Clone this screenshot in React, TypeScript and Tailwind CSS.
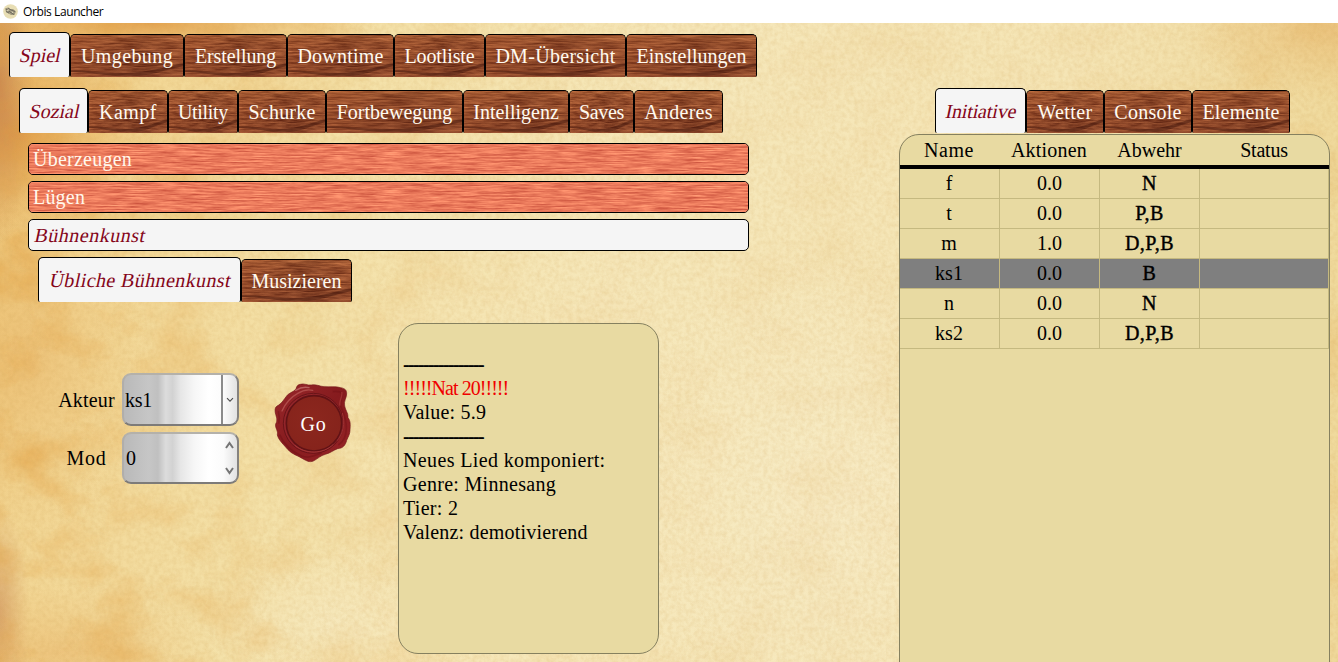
import React from "react";

type Label = { text: string; box: string; tracking?: string };

function Parchment() {
  return (
    <svg className="absolute inset-0 h-full w-full" preserveAspectRatio="none" viewBox="0 0 1338 639" aria-hidden="true">
      <defs>
        <linearGradient id="pBase" x1="0" x2="1" y1="0" y2="0.12">
          <stop offset="0" stopColor="#ecc274" />
          <stop offset="0.1" stopColor="#f2d592" />
          <stop offset="0.28" stopColor="#f4e1a8" />
          <stop offset="0.5" stopColor="#f6e8bb" />
          <stop offset="0.8" stopColor="#f5e5b5" />
          <stop offset="1" stopColor="#f0da9d" />
        </linearGradient>
        <radialGradient id="pOrange">
          <stop offset="0" stopColor="#de8f35" stopOpacity="0.7" />
          <stop offset="1" stopColor="#e6a548" stopOpacity="0" />
        </radialGradient>
        <radialGradient id="pBrown">
          <stop offset="0" stopColor="#c0784a" stopOpacity="0.7" />
          <stop offset="1" stopColor="#c98a52" stopOpacity="0" />
        </radialGradient>
        <radialGradient id="pLight">
          <stop offset="0" stopColor="#f8edc9" stopOpacity="0.8" />
          <stop offset="1" stopColor="#f8edc9" stopOpacity="0" />
        </radialGradient>
        <filter id="pBlotch" x="0" y="0" width="100%" height="100%" colorInterpolationFilters="sRGB">
          <feTurbulence type="fractalNoise" baseFrequency="0.014 0.018" numOctaves="6" seed="21" />
          <feColorMatrix values="0 0 0 0 0.89  0 0 0 0 0.63  0 0 0 0 0.26  1.5 0 0 0 -0.66" />
        </filter>
        <filter id="pGrain" x="0" y="0" width="100%" height="100%" colorInterpolationFilters="sRGB">
          <feTurbulence type="fractalNoise" baseFrequency="0.22" numOctaves="4" seed="3" />
          <feColorMatrix values="0 0 0 0 0.8  0 0 0 0 0.62  0 0 0 0 0.32  0.32 0 0 0 -0.1" />
        </filter>
        <linearGradient id="pFade" x1="0" x2="1">
          <stop offset="0" stopColor="#fff" />
          <stop offset="0.12" stopColor="#999" />
          <stop offset="0.25" stopColor="#555" />
          <stop offset="0.45" stopColor="#222" />
          <stop offset="0.8" stopColor="#222" />
          <stop offset="1" stopColor="#555" />
        </linearGradient>
        <mask id="pMask">
          <rect width="1338" height="639" fill="url(#pFade)" />
        </mask>
      </defs>
      <rect width="1338" height="639" fill="url(#pBase)" />
      <ellipse cx="20" cy="110" rx="130" ry="110" fill="url(#pOrange)" />
      <ellipse cx="150" cy="0" rx="230" ry="35" fill="url(#pOrange)" />
      <ellipse cx="0" cy="60" rx="35" ry="160" fill="url(#pBrown)" />
      <ellipse cx="0" cy="590" rx="30" ry="110" fill="url(#pBrown)" opacity="0.7" />
      <ellipse cx="30" cy="340" rx="120" ry="170" fill="url(#pOrange)" opacity="0.35" />
      <ellipse cx="60" cy="630" rx="160" ry="70" fill="url(#pOrange)" opacity="0.4" />
      <ellipse cx="1330" cy="5" rx="150" ry="75" fill="url(#pOrange)" opacity="0.45" />
      <ellipse cx="830" cy="480" rx="220" ry="260" fill="url(#pLight)" />
      <ellipse cx="330" cy="600" rx="130" ry="80" fill="url(#pLight)" opacity="0.6" />
      <g mask="url(#pMask)">
        <rect width="1338" height="639" filter="url(#pBlotch)" />
      </g>
      <rect width="1338" height="639" filter="url(#pGrain)" />
    </svg>
  );
}

function SharedFilters() {
  return (
    <svg className="absolute h-0 w-0" aria-hidden="true">
      <defs>
        <filter id="woodDark" x="0" y="0" width="100%" height="100%" colorInterpolationFilters="sRGB">
          <feTurbulence type="fractalNoise" baseFrequency="0.05 0.6" numOctaves="4" seed="12" />
          <feColorMatrix values="0.7 0 0 0 0.24  0.56 0 0 0 0.03  0.38 0 0 0 -0.01  0 0 0 0 1" />
        </filter>
        <filter id="woodLight" x="0" y="0" width="100%" height="100%" colorInterpolationFilters="sRGB">
          <feTurbulence type="fractalNoise" baseFrequency="0.04 0.65" numOctaves="4" seed="5" />
          <feColorMatrix values="0.34 0 0 0 0.75  0.42 0 0 0 0.27  0.32 0 0 0 0.2  0 0 0 0 1" />
        </filter>
        <linearGradient id="woodShade" x1="0" x2="0" y1="0" y2="1">
          <stop offset="0" stopColor="#c77a42" stopOpacity="0.35" />
          <stop offset="0.4" stopColor="#8a4020" stopOpacity="0.1" />
          <stop offset="0.75" stopColor="#5a2010" stopOpacity="0.25" />
          <stop offset="1" stopColor="#a55a3a" stopOpacity="0.4" />
        </linearGradient>
        <linearGradient id="woodEdge" x1="0" x2="1" y1="0" y2="0">
          <stop offset="0" stopColor="#c0683a" stopOpacity="0.25" />
          <stop offset="0.6" stopColor="#4a180c" stopOpacity="0.2" />
          <stop offset="1" stopColor="#a85c36" stopOpacity="0.2" />
        </linearGradient>
      </defs>
    </svg>
  );
}

function DarkWood() {
  return (
    <svg className="absolute inset-0 h-full w-full" viewBox="0 0 100 43" preserveAspectRatio="none" aria-hidden="true">
      <rect width="100" height="43" filter="url(#woodDark)" />
      <rect width="100" height="43" fill="url(#woodShade)" />
      <rect width="100" height="43" fill="url(#woodEdge)" />
      <path d="M0 36 C20 36 38 41 60 38 S85 32 100 29 V32 C85 35 76 41 58 42 H40 C25 40 12 38 0 37.5Z" fill="#3d130a" opacity="0.45" />
    </svg>
  );
}

const serif = "font-['Liberation_Serif',serif] text-[20px] leading-[24px]";

function TabBar({ items, className = "" }: { items: Label[]; className?: string }) {
  return (
    <div className={`flex h-[45px] items-end ${className}`}>
      {items.map((t, i) =>
        i === 0 ? (
          <button
            key={t.text}
            className={`flex h-[45px] shrink-0 items-center justify-center rounded-t-[5px] rounded-b-[2px] border border-b-0 border-black bg-[#f5f5f5] pl-[2px] whitespace-nowrap text-[#85061a] ${t.box}`}
          >
            <span className={`inline-block -skew-x-12 ${t.tracking ?? ""}`}>{t.text}</span>
          </button>
        ) : (
          <button
            key={t.text}
            className={`relative flex h-[43px] shrink-0 items-center justify-center overflow-hidden rounded-t-[5px] rounded-b-[2px] border border-b-0 border-black bg-[#8a4526] whitespace-nowrap text-[#fffaf0] ${t.box}`}
          >
            <DarkWood />
            <span className={`relative ${t.tracking ?? ""}`}>{t.text}</span>
          </button>
        ),
      )}
    </div>
  );
}

const mainTabs: Label[] = [
  { text: "Spiel", box: "w-[61px]" },
  { text: "Umgebung", box: "w-[114px]", tracking: "tracking-[0.4px]" },
  { text: "Erstellung", box: "w-[103px]", tracking: "tracking-[-0.1px]" },
  { text: "Downtime", box: "w-[107px]", tracking: "tracking-[0.2px]" },
  { text: "Lootliste", box: "w-[91px]", tracking: "tracking-[-0.1px]" },
  { text: "DM-Übersicht", box: "w-[141px]", tracking: "tracking-[0.3px]" },
  { text: "Einstellungen", box: "w-[131px]" },
];

const skillTabs: Label[] = [
  { text: "Sozial", box: "w-[69px]" },
  { text: "Kampf", box: "w-[80px]", tracking: "tracking-[0.5px]" },
  { text: "Utility", box: "w-[70px]", tracking: "tracking-[-0.3px]" },
  { text: "Schurke", box: "w-[88px]", tracking: "tracking-[0.2px]" },
  { text: "Fortbewegung", box: "w-[137px]" },
  { text: "Intelligenz", box: "w-[106px]" },
  { text: "Saves", box: "w-[65px]", tracking: "tracking-[-0.3px]" },
  { text: "Anderes", box: "w-[89px]", tracking: "tracking-[0.3px]" },
];

const artTabs: Label[] = [
  { text: "Übliche Bühnenkunst", box: "w-[203px]", tracking: "tracking-[0.4px]" },
  { text: "Musizieren", box: "w-[111px]" },
];

const sideTabs: Label[] = [
  { text: "Initiative", box: "w-[91px]", tracking: "tracking-[-0.15px]" },
  { text: "Wetter", box: "w-[78px]", tracking: "tracking-[0.4px]" },
  { text: "Console", box: "w-[88px]", tracking: "tracking-[0.25px]" },
  { text: "Elemente", box: "w-[98px]", tracking: "tracking-[0.2px]" },
];

function WoodBar({ text, tracking }: { text: string; tracking: string }) {
  return (
    <div className="relative flex h-8 items-center overflow-hidden rounded-[5px] border border-black bg-[#e8795a] pl-[4px] text-[#fff8ec]">
      <svg className="absolute inset-0 h-full w-full" aria-hidden="true">
        <rect width="100%" height="100%" filter="url(#woodLight)" />
      </svg>
      <span className={`relative ${tracking}`}>{text}</span>
    </div>
  );
}

const metal =
  "border-t-2 border-r-2 border-b-2 border-l-2 border-t-[#b4b1aa] border-l-[#b0aeab] border-r-[#85827f] border-b-[#7d7b79] bg-[linear-gradient(90deg,#b9b9b9_0%,#c6c6c6_22%,#c0c0c0_30%,#dcdcdc_37%,#d2d2d2_43%,#e6e6e6_50%,#f6f6f6_62%,#ffffff_75%,#fbfbfb_88%,#e2e2e2_100%)]";

function Seal() {
  return (
    <button className="relative mt-[81px] ml-[35px] flex h-[80px] w-[77px] items-center justify-center text-white">
      <svg className="absolute inset-0 h-full w-full" viewBox="702 70 231 240" aria-hidden="true">
        <defs>
          <radialGradient id="sealDisc" cx="0.45" cy="0.45" r="0.6">
            <stop offset="0" stopColor="#8c271e" />
            <stop offset="1" stopColor="#85231b" />
          </radialGradient>
          <linearGradient id="sealRim" x1="0" x2="1" y1="0" y2="1">
            <stop offset="0" stopColor="#98272a" />
            <stop offset="0.5" stopColor="#861b1e" />
            <stop offset="1" stopColor="#982427" />
          </linearGradient>
        </defs>
        <path
          d="M781 74 C792 70 802 78 814 76 C828 73 838 80 852 81 C873 83 885 79 902 84 C917 87 920 92 920 103 C919 116 911 124 914 139 C916 152 925 160 924 174 C932 184 931 196 930 210 C930 224 925 230 920 242 C916 258 908 266 893 267 C881 271 871 280 856 284 C842 287 834 297 820 304 C808 309 799 303 788 297 C775 288 756 284 744 270 C733 257 716 242 712 226 C716 214 704 205 707 193 C714 182 709 172 706 160 C704 147 706 141 715 137 C727 130 732 118 740 109 C747 98 768 96 770 82 C772 77 776 75 781 74Z"
          fill="url(#sealRim)"
          stroke="#74161a"
          strokeWidth="2"
        />
        <path d="M726 154 C736 132 752 113 772 102 C787 92 804 89 818 92" fill="none" stroke="#c2625d" strokeWidth="4" strokeLinecap="round" opacity="0.65" />
        <path d="M767 92 C780 84 794 81 807 84" fill="none" stroke="#dd9a94" strokeWidth="4" strokeLinecap="round" opacity="0.5" />
        <path d="M715 155 C719 170 719 180 716 192 M719 225 C731 253 754 276 785 289 C806 297 824 287 845 280" fill="none" stroke="#6d1014" strokeWidth="5" opacity="0.45" />
        <path d="M878 96 C892 94 903 96 907 104 C904 118 899 126 902 139 C909 157 920 178 919 205 C919 227 911 246 895 256" fill="none" stroke="#6d1014" strokeWidth="5" opacity="0.4" />
        <path d="M905 97 C910 106 896 125 900 138" fill="none" stroke="#b64442" strokeWidth="4" opacity="0.6" />
        <circle cx="820" cy="191" r="90" fill="#92252a" stroke="#6a1418" strokeWidth="3" />
        <circle cx="822" cy="191" r="83" fill="url(#sealDisc)" stroke="#611215" strokeWidth="5" />
        <path d="M765 257 C796 284 849 284 880 254" fill="none" stroke="#ad3f3c" strokeWidth="3" opacity="0.7" />
        <path d="M907 160 C916 192 909 222 892 243" fill="none" stroke="#ad3a3a" strokeWidth="3" opacity="0.7" />
      </svg>
      <span className="relative mt-px ml-[2px] tracking-[0.8px]">Go</span>
    </button>
  );
}

function Controls() {
  return (
    <div className="mt-[71px] flex w-[203px] flex-col gap-[6px]">
      <div className="flex h-[53px] items-center">
        <span className="w-[86px] pl-[15px] text-center tracking-[0.2px]">Akteur</span>
        <div className={`ml-auto flex h-[53px] w-[117px] items-stretch rounded-[9px] ${metal}`}>
          <span className="flex flex-1 items-center pl-[1px] tracking-[-0.3px]">ks1</span>
          <span className="flex w-[16px] items-center justify-center border-l-2 border-[#8b8b8b]">
            <svg width="8" height="6" viewBox="0 0 8 6" fill="none" stroke="#4c4c4c" strokeWidth="1.1">
              <path d="M1 1.2 4 4.2 7 1.2" />
            </svg>
          </span>
        </div>
      </div>
      <div className="flex h-[52px] items-center">
        <span className="w-[86px] pl-[15px] text-center tracking-[0.7px]">Mod</span>
        <div className={`ml-auto flex h-[52px] w-[117px] items-stretch rounded-[9px] ${metal}`}>
          <span className="flex flex-1 items-center pl-[2px]">0</span>
          <span className="flex w-[16px] flex-col items-center justify-between py-[7px] pl-px">
            <svg width="9" height="8" viewBox="0 0 9 8" fill="none" stroke="#747474" strokeWidth="2">
              <path d="M1 7 4.5 2 8 7" />
            </svg>
            <svg width="9" height="8" viewBox="0 0 9 8" fill="none" stroke="#747474" strokeWidth="2">
              <path d="M1 1 4.5 6 8 1" />
            </svg>
          </span>
        </div>
      </div>
    </div>
  );
}

function Output() {
  return (
    <div className="mt-[21px] ml-[47px] h-[331px] w-[261px] rounded-[20px] border border-[#85805f] bg-[#e8daa2] pt-[28px] pl-1 whitespace-nowrap">
      <div className="font-bold tracking-[-1.66px]">----------------</div>
      <div className="tracking-[-0.95px] text-[#f00000]">!!!!!Nat 20!!!!!</div>
      <div className="tracking-[0.2px]">Value: 5.9</div>
      <div className="font-bold tracking-[-1.66px]">----------------</div>
      <div className="tracking-[0.37px]">Neues Lied komponiert:</div>
      <div className="tracking-[0.3px]">Genre: Minnesang</div>
      <div className="tracking-[0.3px]">Tier: 2</div>
      <div className="tracking-[0.2px]">Valenz: demotivierend</div>
    </div>
  );
}

const rows = [
  ["f", "0.0", "N"],
  ["t", "0.0", "P,B"],
  ["m", "1.0", "D,P,B"],
  ["ks1", "0.0", "B"],
  ["n", "0.0", "N"],
  ["ks2", "0.0", "D,P,B"],
];

function InitiativeTable() {
  return (
    <div className="mt-px h-[560px] w-[431px] rounded-[20px] border border-[#85805f] bg-[#e8daa2] text-black">
      <div className="grid h-[34px] grid-cols-[100px_100px_100px_129px] border-b-4 border-black pt-[3px] text-center">
        <span className="pr-[2px] tracking-[0.5px]">Name</span>
        <span className="pr-[2px] tracking-[0.2px]">Aktionen</span>
        <span className="pr-px">Abwehr</span>
        <span className="pr-px tracking-[-0.2px]">Status</span>
      </div>
      {rows.map((r) => (
        <div
          key={r[0]}
          className={`grid h-[30px] grid-cols-[100px_100px_100px_129px] text-center ${r[0] === "ks1" ? "bg-[#7f7f7f]" : ""}`}
        >
          <span className="border-r border-b border-[#c5b980] pt-[2px] pr-px">{r[0]}</span>
          <span className="border-r border-b border-[#c5b980] pt-[2px]">{r[1]}</span>
          <span className="border-r border-b border-[#c5b980] pt-[2px] tracking-[0.5px] [-webkit-text-stroke:0.4px_black]">{r[2]}</span>
          <span className="border-r border-b border-[#c5b980]" />
        </div>
      ))}
    </div>
  );
}

export default function App() {
  return (
    <div className={`flex h-[662px] w-[1338px] flex-col overflow-hidden bg-white text-black ${serif}`}>
      <header className="flex h-[23px] shrink-0 items-center bg-white pl-[3px] font-['Open_Sans',sans-serif] text-[12px] leading-none">
        <svg width="15" height="15" viewBox="0 0 15 15" aria-hidden="true">
          <circle cx="7.5" cy="7.5" r="7.3" fill="#e8deb4" />
          <path d="M2 4.5 5 3.5 7 5 10 5 13 7.5 11.5 11 8 11 5.5 9.5 3 8Z" fill="#a39b80" />
          <path d="M3 5 7 8 11 10.5M5 4 8 6 12 7.5M3 7.5 6 9" fill="none" stroke="#68645a" strokeWidth="0.9" />
          <path d="M4 6.5 6 6M9 7.5 10 9" stroke="#f4edcf" strokeWidth="0.8" />
        </svg>
        <span className="ml-[5px] tracking-[-0.4px]">Orbis Launcher</span>
      </header>
      <main className="relative flex min-h-0 flex-1 overflow-hidden">
        <Parchment />
        <SharedFilters />
        <section className="relative w-[899px] shrink-0 pt-[9px]">
          <TabBar items={mainTabs} className="ml-[9px]" />
          <TabBar items={skillTabs} className="mt-[11px] ml-[19px]" />
          <div className="mt-[10px] ml-[28px] flex w-[721px] flex-col gap-[6px]">
            <WoodBar text="Überzeugen" tracking="tracking-[0.25px]" />
            <WoodBar text="Lügen" tracking="tracking-[0.2px]" />
            <div className="flex h-8 items-center rounded-[5px] border border-black bg-[#f5f5f5] pl-[6px] text-[#85061a]">
              <span className="inline-block -skew-x-12 tracking-[0.5px]">Bühnenkunst</span>
            </div>
          </div>
          <TabBar items={artTabs} className="mt-[6px] ml-[38px]" />
          <div className="ml-[36px] flex items-start">
            <Controls />
            <Seal />
            <Output />
          </div>
        </section>
        <aside className="relative w-[439px] shrink-0 pt-[65px]">
          <TabBar items={sideTabs} className="ml-[36px]" />
          <InitiativeTable />
        </aside>
      </main>
    </div>
  );
}
